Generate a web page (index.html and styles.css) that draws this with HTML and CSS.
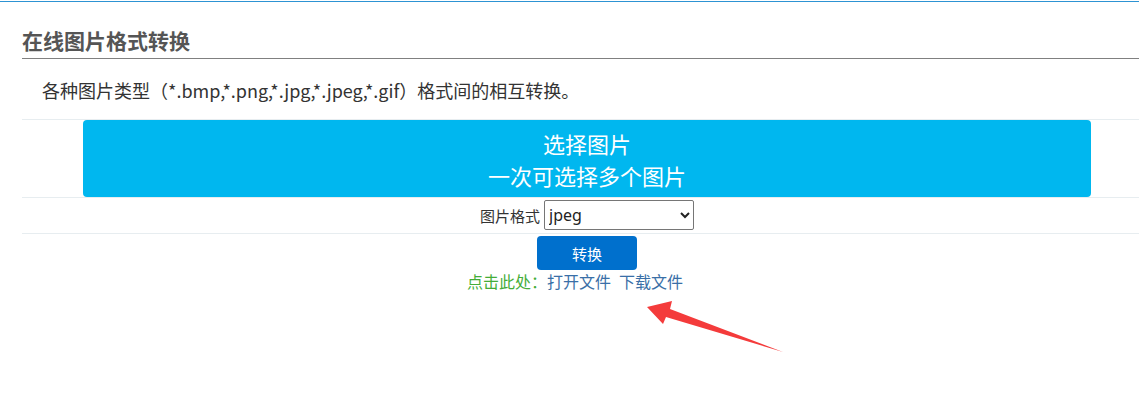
FILE: index.html
```html
<!DOCTYPE html>
<html lang="zh-CN">
<head>
<meta charset="utf-8">
<title>在线图片格式转换</title>
<link rel="stylesheet" href="styles.css">
</head>
<body>
<div class="topline"></div>
<div class="panel">
  <h3 class="title">在线图片格式转换</h3>
  <p class="desc">各种图片类型（*.bmp,*.png,*.jpg,*.jpeg,*.gif）格式间的相互转换。</p>
  <div class="row row-pick">
    <div class="col">
      <button class="pick" type="button">选择图片<br>一次可选择多个图片</button>
    </div>
  </div>
  <div class="row row-format">
    <div class="col">
      <label class="label" for="fmt">图片格式</label><select id="fmt" class="select">
        <option>jpeg</option>
        <option>png</option>
        <option>bmp</option>
        <option>gif</option>
      </select>
    </div>
  </div>
  <div class="row row-action">
    <div class="col">
      <button class="convert" type="button">转换</button>
      <div class="links"><span class="hint">点击此处：</span><a href="#" class="link">打开文件</a><a href="#" class="link">下载文件</a></div>
    </div>
  </div>
</div>
<svg class="arrow" width="1139" height="404" viewBox="0 0 1139 404" aria-hidden="true">
  <polygon points="647,307 672,301 670,309 783,352 666,317 663,324" fill="#f43b3b"/>
</svg>
</body>
</html>
```

FILE: styles.css
```css
html, body {
  margin: 0;
  padding: 0;
  background: #fff;
}
body {
  font-family: "Noto Sans CJK SC", "Noto Sans", sans-serif;
  color: #333;
  width: 1139px;
  height: 404px;
  overflow: hidden;
  position: relative;
}
.topline {
  height: 1px;
  border-top: 1px solid #fff;
  background: #2d93d3;
}
.panel {
  padding-left: 22px;
}
.title {
  margin: 0;
  padding: 22px 0 2px;
  line-height: 32px;
  font-size: 21px;
  font-weight: bold;
  color: #555;
  border-bottom: 1px solid #808080;
}
.desc {
  margin: 0;
  padding: 2px 0 0 20px;
  line-height: 58px;
  font-size: 18px;
  color: #333;
}
.row {
  border-top: 1px solid #e7edf0;
}
.row-pick {
  border-bottom: 1px solid #e7edf0;
}
.row-format {
  height: 36px;
  box-sizing: border-box;
  border-top: 0;
  border-bottom: 1px solid #e7edf0;
}
.row-format .col {
  padding-top: 2px;
}
.row-action {
  border-top: 0;
}
.col {
  margin-left: 61px;
  width: 1008px;
  text-align: center;
}
.pick {
  display: block;
  width: 1008px;
  height: 77px;
  border: 0;
  border-radius: 4px;
  background: #00b7ef;
  color: #fff;
  font-family: inherit;
  font-size: 22px;
  line-height: 32px;
  padding: 6px 0 6px;
  cursor: pointer;
}
.label {
  font-size: 15px;
  color: #333;
  vertical-align: middle;
  margin-right: 4px;
}
.select {
  width: 150px;
  height: 30px;
  font-family: "Noto Sans", sans-serif;
  font-size: 16px;
  color: #222;
  vertical-align: middle;
  border: 1px solid #767676;
  border-radius: 2px;
  background: #fff;
}
.convert {
  margin-top: 2px;
  width: 100px;
  height: 34px;
  border: 0;
  border-radius: 4px;
  background: #0070cd;
  color: #fff;
  font-family: inherit;
  font-size: 15px;
  cursor: pointer;
}
.links {
  margin-right: 24px;
  line-height: 22px;
  font-size: 16px;
}
.hint {
  color: #44ad38;
}
.link {
  color: #3a6fa7;
  text-decoration: none;
  margin-right: 8px;
}
.link:last-child {
  margin-right: 0;
}
.arrow {
  position: absolute;
  left: 0;
  top: 0;
  pointer-events: none;
}
```
